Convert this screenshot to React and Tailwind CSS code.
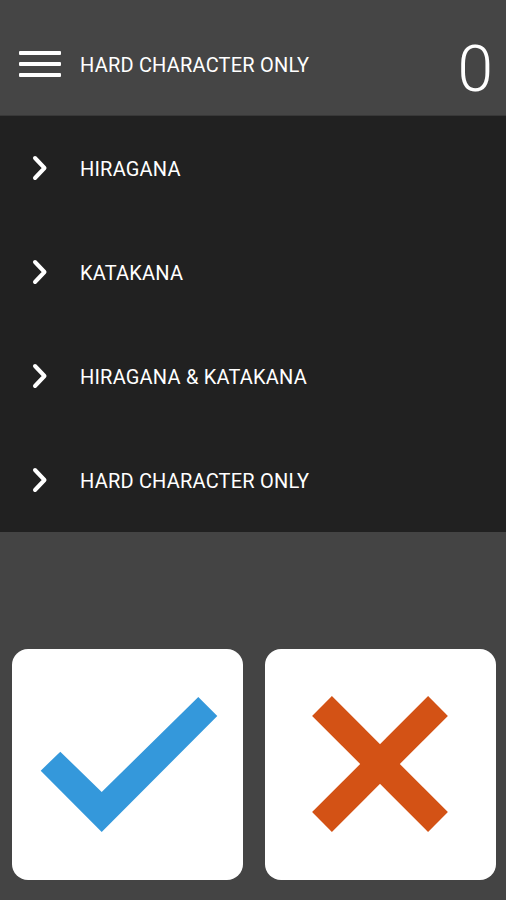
import React from 'react';

const items = ['HIRAGANA', 'KATAKANA', 'HIRAGANA & KATAKANA', 'HARD CHARACTER ONLY'];

const Chevron = () => (
    <svg width="18" height="26" viewBox="0 0 18 26" className="shrink-0">
        <path d="M4 3 L13.5 13 L4 23" fill="none" stroke="#ffffff" strokeWidth="4" strokeLinecap="round" strokeLinejoin="round" />
    </svg>
);

const App = () => {
    return (
        <div className="w-[506px] h-[900px] bg-[#444444] flex flex-col overflow-hidden" style={{ fontFamily: 'Roboto, "Liberation Sans", sans-serif' }}>
            {/* Header */}
            <div className="h-[115px] bg-[#454545] flex items-center pt-[14px] pl-[19px] pr-[13px] shrink-0">
                <div className="w-[42px] flex flex-col gap-[7px] -mt-[2px]">
                    <div className="h-[4px] bg-white rounded-[1px]" />
                    <div className="h-[4px] bg-white rounded-[1px]" />
                    <div className="h-[4px] bg-white rounded-[1px]" />
                </div>
                <span className="ml-[19px] text-white text-[20px] leading-none tracking-[0.2px]">HARD CHARACTER ONLY</span>
                <span className="ml-auto text-white text-[64px] font-light leading-none mt-[10px]">0</span>
            </div>

            {/* Menu */}
            <div className="bg-[#212121] shrink-0 border-t border-[#383838]">
                {items.map((label) => (
                    <div key={label} className="h-[104px] flex items-center pl-[31px]">
                        <Chevron />
                        <span className="ml-[31px] mt-[2px] text-white text-[20px] leading-none tracking-[0.2px]">{label}</span>
                    </div>
                ))}
            </div>

            {/* Answer buttons */}
            <div className="flex-1 flex items-end px-[12px] pb-[20px] gap-[22px]">
                <div className="w-[231px] h-[231px] bg-white rounded-[16px] flex">
                    <svg width="231" height="231" viewBox="0 0 231 231">
                        <polygon points="28.7,121.7 48.3,102.7 89.7,143 186.3,48 205.3,67 89.7,183" fill="#3498db" />
                    </svg>
                </div>
                <div className="w-[231px] h-[231px] bg-white rounded-[16px] flex">
                    <svg width="231" height="231" viewBox="0 0 231 231">
                        <line x1="57" y1="57" x2="173" y2="173" stroke="#d35215" strokeWidth="28" />
                        <line x1="173" y1="57" x2="57" y2="173" stroke="#d35215" strokeWidth="28" />
                    </svg>
                </div>
            </div>
        </div>
    );
};

export default App;
